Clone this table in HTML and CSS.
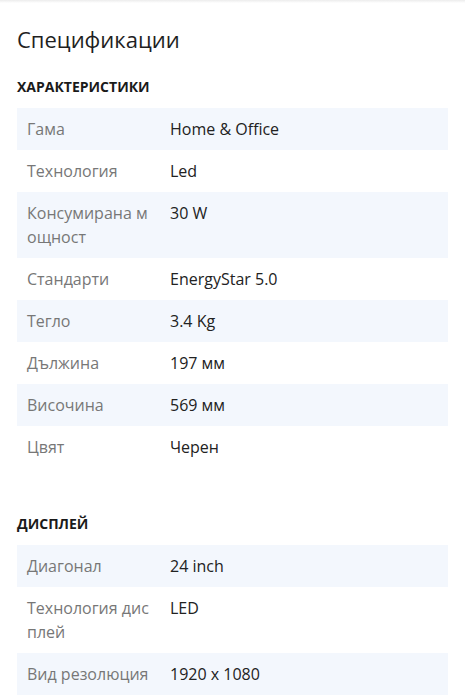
FILE: index.html
```html
<!DOCTYPE html>
<html lang="bg">
<head>
<meta charset="utf-8">
<link rel="stylesheet" href="styles.css">
</head>
<body>
<div class="topline"></div>
<main class="page">
  <h1 class="title">Спецификации</h1>
  <section class="group">
    <h2 class="group-title">ХАРАКТЕРИСТИКИ</h2>
    <table class="specs">
      <tr><td class="k">Гама</td><td class="v">Home &amp; Office</td></tr>
      <tr><td class="k">Технология</td><td class="v">Led</td></tr>
      <tr><td class="k">Консумирана мощност</td><td class="v">30 W</td></tr>
      <tr><td class="k">Стандарти</td><td class="v">EnergyStar 5.0</td></tr>
      <tr><td class="k">Тегло</td><td class="v">3.4 Kg</td></tr>
      <tr><td class="k">Дължина</td><td class="v">197 мм</td></tr>
      <tr><td class="k">Височина</td><td class="v">569 мм</td></tr>
      <tr><td class="k">Цвят</td><td class="v">Черен</td></tr>
    </table>
  </section>
  <section class="group second">
    <h2 class="group-title">ДИСПЛЕЙ</h2>
    <table class="specs">
      <tr><td class="k">Диагонал</td><td class="v">24 inch</td></tr>
      <tr><td class="k">Технология дисплей</td><td class="v">LED</td></tr>
      <tr><td class="k">Вид резолюция</td><td class="v">1920 x 1080</td></tr>
    </table>
  </section>
</main>
</body>
</html>
```
FILE: styles.css
```css
html, body {
  margin: 0;
  padding: 0;
  background: #fff;
}
body {
  font-family: "Open Sans", "Noto Sans", sans-serif;
  color: #222;
}
.topline {
  height: 3px;
  background: linear-gradient(#ececec, #fff);
}
.page {
  padding: 0 17px;
}
.title {
  margin: 21px 0 0;
  font-size: 22px;
  font-weight: 400;
  line-height: 30px;
  color: #1f1f1f;
}
.group-title {
  margin: 23px 0 12px;
  font-size: 14px;
  font-weight: 700;
  line-height: 19px;
  color: #1a1a1a;
}
.second .group-title {
  margin-top: 46px;
}
.specs {
  width: 100%;
  border-collapse: collapse;
  font-size: 16px;
  line-height: 24px;
}
.specs tr:nth-child(odd) {
  background: #f3f7fd;
}
.specs td {
  vertical-align: top;
  padding: 9px 10px;
}
.k {
  width: 123px;
  color: #777;
  word-break: break-all;
}
.v {
  color: #222;
}
```
